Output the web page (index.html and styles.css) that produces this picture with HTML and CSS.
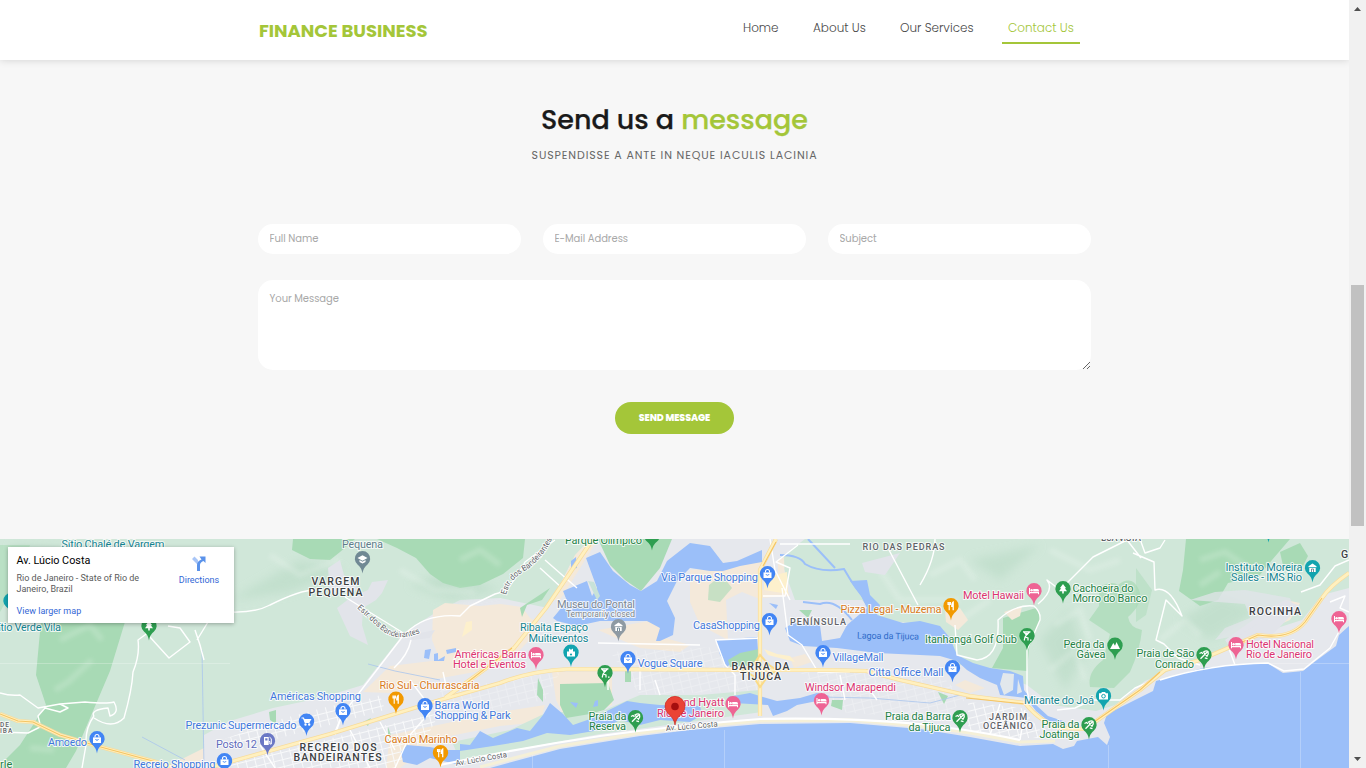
FILE: index.html
```html
<!DOCTYPE html>
<html lang="en">
<head>
<meta charset="utf-8">
<title>Finance Business - Contact Us</title>
<link rel="stylesheet" href="styles.css">
</head>
<body>
<div class="page">
  <header class="header">
    <div class="container header-inner">
      <a class="brand">FINANCE BUSINESS</a>
      <nav class="nav">
        <a class="nav-link home">Home</a>
        <a class="nav-link about">About Us</a>
        <a class="nav-link services">Our Services</a>
        <a class="nav-link contact active">Contact Us</a>
      </nav>
    </div>
  </header>
  <main>
    <section class="message">
      <div class="container">
        <h2 class="title">Send us a <em>message</em></h2>
        <p class="subtitle">Suspendisse a ante in neque iaculis lacinia</p>
        <form class="form">
          <div class="fields">
            <input class="field f-name" type="text" placeholder="Full Name">
            <input class="field f-mail" type="text" placeholder="E-Mail Address">
            <input class="field f-subject" type="text" placeholder="Subject">
          </div>
          <textarea class="field area" placeholder="Your Message"></textarea>
          <button class="send" type="button">SEND MESSAGE</button>
        </form>
      </div>
    </section>
    <section class="map">
      <svg class="map-canvas" viewBox="0 539 1349 229" width="1349" height="229">
        <defs>
          <path id="pin" d="M0 14.5C-1 9.5-2.4 8-4.8 5.8A7.7 7.7 0 1 1 4.8 5.8C2.4 8 1 9.5 0 14.5Z"/>
          <g id="bag"><path d="M-4-1.6H4V4H-4Z" fill="#fff"/><path d="M-2-1.5V-2.5A2 2 0 0 1 2-2.5V-1.5" fill="none" stroke="#fff" stroke-width="1.1"/><path d="M-1.5.2A1.6 1.6 0 0 0 1.5.2" fill="none" stroke="#4285f4"/></g>
          <g id="bed" fill="#fff"><path d="M-5-3H-4V1H5V3.2H4V2.2H-4V3.2H-5Z"/><circle cx="-2.4" cy="-.8" r="1.2"/><path d="M-.8-2H3.5Q5-2 5-.2V.5H-.8Z"/></g>
          <g id="fork" fill="none" stroke="#fff"><path d="M-3-4V-1.5H-.6V-4M-1.8-4V4.3" stroke-width="1.1"/><path d="M2.2 4.3V-4Q.8-3.2.8.3H2.2" stroke-width="1.3"/></g>
          <g id="tree" fill="#fff"><path d="M0-5L3.2-.8H1.8L4 2.2H-4L-1.8-.8H-3.2Z"/><path d="M-.8 2H.8V4.4H-.8Z"/></g>
          <g id="golf" stroke="#fff" fill="none" stroke-width="1.2"><path d="M-4-4.2H3.5M-3-4L-.5-1L-2 1L-2.800 4.5M-.5-1L2.5-4M-2 1L1 2V4.500"/><circle cx="-.3" cy="-2.300" r=".7"/><path d="M3 4.2H4.5"/></g>
          <g id="beach" stroke="#fff" fill="none" stroke-width="1.3"><path d="M-3.5 3.8L3.2-3M-.5-3Q2.500-5 4-3.6Q5-1 3 1.2Z"/><path d="M-4.500-1.500L-2.500-2.500L-1-1.200M.800 2.800L3.500 3.600"/></g>
          <g id="museum"><path d="M-4-1.8L0-4.5L4-1.8V-.8H-4ZM-3.2 0H3.2V4H-3.2Z" fill="#fff"/><path d="M-1 4V1H1V4" fill="none" stroke="#78909c"/></g>
          <g id="cap" fill="#fff"><path d="M-5-1L0-3.8L5-1L0 1.8Z"/><path d="M-3 1V3L0 4.5L3 3V1L0 2.7Z"/></g>
          <g id="cart" stroke="#fff" fill="none" stroke-width="1.2"><path d="M-5-3.5H-3L-1.3 1H3"/><path d="M-2-2H4L2.7.2H-1.3Z" fill="#fff"/><circle cx="-1" cy="3" r=".6"/><circle cx="2.7" cy="3" r=".6"/></g>
          <g id="fuel"><path d="M-3.5-4H1.2V4H-3.5Z" fill="#fff"/><path d="M-2.3-2.7H0V-.5H-2.3Z" fill="#6b78c5"/><path d="M1.3.5H2.4V3H3.8V-2.3L2-3.8" fill="none" stroke="#fff"/></g>
          <g id="camera"><path d="M-4.5-2.8H-2.5L-1.5-4H1.5L2.5-2.8H4.5V3.4H-4.5Z" fill="#fff"/><circle r="1.8" cy=".2" fill="none" stroke="#12a4af"/></g>
          <g id="peak" fill="#fff"><path d="M-5 3.5L-1.7-2.5L0 .3L1.5-3.5L5 3.5Z"/></g>
          <g id="stage"><path d="M-4-1H4V4H-4ZM-2-4L0-2.8L2-4V-.5H-2Z" fill="#fff"/><circle cy="2" r="1.1" fill="#12a4af"/></g>
          <pattern id="streets" width="9" height="7" patternUnits="userSpaceOnUse" patternTransform="rotate(-14)"><path d="M0 .5H9M.5 0V7" stroke="#f8f9fa" stroke-width="1" fill="none"/></pattern>
          <filter id="soft"><feGaussianBlur stdDeviation="5"/></filter>
          <filter id="relief"><feGaussianBlur stdDeviation="2"/></filter>
        </defs>

        <rect class="urban" x="0" y="539" width="1349" height="229"/>

        <!-- woodland and hills -->
        <path class="wood" d="M0 539H590L570 565L548 608L500 598L460 600L435 613L405 632L363 685L320 698L273 708L230 721L204 735L204 768H0Z"/>
        <path class="wood" d="M780 558L805 539H1349V588L1322 595L1302 620L1258 634L1228 646L1190 662L1145 681L1115 705L1096 711L1053 705L1027 685L990 670L955 664L930 625L880 620L862 600L795 600Z"/>
        <g class="shade" filter="url(#soft)">
          <path d="M230 600L300 560L345 570L290 592ZM410 585L450 570L500 590L450 600ZM10 545L60 548L45 590ZM970 560L1040 545L1000 580ZM1040 640L1070 610L1085 655L1065 690ZM1180 620L1220 595L1260 610L1210 640Z"/>
        </g>
        <path class="forest" d="M42 610L128 612L110 671L93 711L76 751L66 768H0V765L20 745L46 705L36 675Z"/>
        <path class="forest" d="M0 545H30L18 580L0 612Z" opacity=".55"/>
        <path class="forest" d="M293 539H355L340 552L330 560L310 559L292 550Z"/>
        <path class="forest" d="M377 539H525L523 558L503 574L480 585L460 588L443 583L430 574L416 558L397 548Z"/>
        <path class="forest" d="M598 539H672L660 568L641 591L625 580L610 565Z"/>
        <path class="forest" d="M1186 539H1290L1272 560L1259 576L1228 583L1218 600L1200 606L1179 591L1183 570Z"/>
        <path class="forest" d="M1280 552L1300 543L1308 556L1300 572L1284 570Z"/>
        <path class="forest" d="M1003 618L1036 608L1041 618L1029 648L1027 671L992 668L1003 648Z"/>
        <path class="forest" d="M1099 587Q1112 580 1118 585Q1132 574 1139 590Q1144 603 1128 617Q1130 628 1142 630Q1140 650 1130 672L1114 688L1090 687Q1087 672 1103 660L1110 634L1089 620L1099 606Z" opacity=".7"/>
        <path class="forest" d="M1136 568L1152 590L1146 615L1136 622Z" opacity=".45"/>
        <path class="ridge" filter="url(#relief)" d="M60 640L90 625L102 640M92 660L68 682L55 690M30 748L54 750M460 560L480 550L500 565M1200 560L1225 552L1245 566M1200 585L1220 572M930 575L960 560L975 580M1050 550L1090 570L1120 560M1055 625L1080 610L1090 640M270 555L300 575L340 560M400 570L435 590L475 592M1160 640L1185 620L1200 635M880 570L900 600L960 600M960 620L990 600M1050 670L1075 650L1085 680"/>

        <!-- sand-coloured blocks -->
        <path class="sand" d="M433 610L445 603L480 606L500 604L522 607L530 618L543 625L520 650L475 672L430 680L390 693L363 692L390 666L440 660L432 640Z"/>
        <path class="sand" d="M575 555L590 539H598L582 565L560 600L553 600Z"/>
        <path class="sand" d="M690 570L740 566L762 555L762 600L742 592L726 600L728 640L700 625L690 602Z"/>
        <path class="forest" d="M709 585L722 575L732 588L720 602L708 600Z" opacity=".6"/>
        <path class="sand" d="M598 630L655 620L665 638L690 645L680 652L640 648ZM552 672L612 671L612 705L566 720L556 700ZM180 760L204 748V768H180ZM390 735L500 712L545 705L540 722L500 726L440 738L400 768H386Z"/>
        <path class="sand" d="M1286 600L1300 603L1290 620L1262 632L1255 622L1270 608ZM1004 612L1022 606L1020 616L1012 620ZM945 610L960 608L968 620L958 630L946 622ZM760 590L785 585L790 596L760 598ZM790 658L805 654L812 662L794 668ZM955 685L970 693L985 688L965 680ZM778 560L784 557L785 592L778 590Z"/>
        <path class="bright-block" d="M466 622L472 621V630L462 637ZM764 578L787 572L788 594L764 590ZM764 649L777 654L790 656L795 662L768 655Z"/>
        <path class="town" d="M337 608L350 598L368 590L372 582L388 580L382 593L376 600L363 608L362 625L368 645L350 636ZM328 568L340 560L344 575L360 590L330 594ZM1225 640L1260 615L1285 600L1300 606L1275 632L1235 655ZM862 563L900 553L885 575L865 572ZM410 635L435 630L430 638L412 640Z"/>
        <path class="town" d="M1190 600L1215 592L1245 590L1290 598L1296 612L1260 622L1240 635L1215 640L1225 628L1250 618L1245 604Z" opacity=".75"/>
        <path class="grid-lines" fill="url(#streets)" d="M222 740L270 722L330 706L360 702L380 695L385 710L330 725L240 748ZM220 765L340 736L440 712L428 735L395 768H222ZM968 702L1022 708L1040 730L1055 738L1020 738L968 730Z"/>
        <path class="grid-lines" opacity=".35" fill="url(#streets)" d="M440 690L560 672L545 700L440 720ZM610 652L740 646L760 690L640 695ZM800 672L940 674L965 700L940 720L840 712Z"/>
        <path class="wood" d="M452 742L510 730L548 712L600 712L640 695L700 695L760 690L762 712L690 722L600 734L460 760Z"/>
        <path class="forest" d="M560 684L608 683L614 700L604 710L590 714L566 718L560 705ZM538 678L543 690L543 702L537 695ZM625 671H631V682H625ZM799 610L812 610L808 618ZM832 700L843 700L842 710L831 706ZM938 692L948 696L944 704ZM520 608L550 588L542 600L527 605L522 617ZM269 712L276 710V724L270 720ZM363 722L371 718L368 726ZM388 727L391 735L388 742Z"/>

        <!-- water -->
        <path class="water" d="M586 558L600 552L613 571L630 585L641 591L657 581L667 561L690 543L710 546L723 563L737 561L762 550L762 562L740 566L723 571L710 571L690 568L677 581L667 601L675 618L673 635L660 641H656L660 628L647 621L600 621L577 626L557 621L553 618L567 601L563 591L587 581L592 596L597 588Z"/>
        <path class="park-edge" d="M588 581L597 600L600 596L594 582Z"/>
        <path class="water" d="M785 628L793 623L820 625L822 641L840 638L847 625L867 608L860 594L850 581L867 580L870 595L880 605L877 615L903 623L920 621L940 626L950 638L957 655L973 663L990 668L1010 671L1023 676L1024 690L1035 704L1048 716L1066 722L1052 724L1036 711L1026 698L1000 695L997 685L980 678L967 670L957 661L940 656L920 655L877 653L837 648L803 646L790 641Z"/>
        <path class="land" d="M1003 673L1014 674L1013 690L1004 695L1000 684ZM1018 679L1022 692L1017 694Z"/>
        <path class="water" d="M716 640L757 637L758 650L740 655L727 667L720 655Z"/>
        <path class="forest" d="M759 649L758 665L730 667L728 660L740 653Z"/>
        <path class="water" d="M728 697L750 693L763 697L777 701L800 698L817 693L830 696L817 701L797 705L787 711L773 716L768 705L733 703Z"/>
        <path class="water" d="M460 744L470 745L480 731L493 738L517 728L530 731L543 715L550 703L563 714L573 725L593 718L607 711L627 701L640 703L660 705L700 706L702 715L690 722L660 720L640 725L620 720L600 730L570 735L547 733L523 741L493 746L460 751Z"/>
        <path class="water" d="M401 752L407 745L430 747L445 750L460 750V765L430 758L417 765L403 762Z"/>
        <path class="water" d="M425 650L431 649L429 659L424 658ZM434 654L438 653L438 660L445 656L444 661L434 661ZM446 650L456 648V652L447 654ZM570 702L578 703L576 708ZM595 701L598 700V706L593 707ZM571 561L576 557L577 568L571 569ZM769 603L778 605L776 609Z"/>
        <path class="stream" d="M780 555Q800 555 805 564Q820 573 844 569Q856 590 866 600M803 602L820 604Q835 598 852 620M808 539L835 568"/>
        <path class="canal" d="M818 697L870 698L930 703L960 695M202 650L204 768M142 737L185 760M368 664L395 671L440 680"/>
        <path class="beach-strip" d="M480 767L560 746L640 733L690 727L760 721L850 720L920 726L970 733L1020 742L1055 741"/>
        <path class="water" d="M490 768L560 749L640 736L690 730L760 724L850 723L920 729L970 737L1020 746L1053 744L1063 749L1074 746L1077 741L1098 737L1107 745L1110 737L1104 723L1107 714L1133 701L1153 691L1156 681L1203 668L1246 664L1269 664L1283 673L1303 671L1313 663L1336 646L1339 635L1349 626V768Z"/>
        <path class="tile-edge" d="M724.500 730V768M1108.500 745V768M1300.500 672V768M532.500 755V768M1270 663.500H1349M0 663.500H230"/>

        <!-- local streets -->
        <g class="road">
          <path d="M0 693Q10 696 20 695L38 708L60 704L68 708L60 712L45 708L38 716L41 728M0 732L28 733L42 726M60 704L85 702Q107 704 114 702Q120 713 110 716L108 708Q90 710 94 716M94 716Q85 728 86 745L82 768M94 718Q112 730 124 718Q132 690 133 672Q140 655 138 640L149 632M149 636L169 658L190 642L180 628L168 626M195 630L200 645L204 660M197 640L208 622"/>
          <path d="M230 612Q255 613 270 605Q300 590 315 590M345 597L405 634Q425 613 460 616L470 606L495 594Q510 592 525 562L555 540M403 636L342 715L335 735M411 640Q408 655 394 668"/>
          <path d="M540 568L562 588M545 560L577 588M598 643L700 645M715 640L762 638M716 641L725 665L735 675V695M782 588L788 635L802 645L818 672L850 672M770 539L775 570L790 600M763 596H785L790 568L776 562L798 545M780 544H850M889 550L918 605M935 539Q935 560 920 585"/>
          <path d="M955 625L957 655L977 660Q1000 658 998 620Q1015 604 1034 606Q1041 612 1040 620L1027 650V690L1030 705M1038 604Q1055 590 1047 580L1060 590Q1080 570 1093 557L1115 546L1127 540L1141 558M1133 553L1154 562L1155 590Q1170 585 1182 616L1166 600L1156 640L1164 644L1178 658M1140 539L1145 553L1160 548L1165 540M1178 658L1200 665M1228 646L1235 665M1301 592L1320 585L1335 566L1349 560M1160 680Q1210 664 1268 663L1284 671L1304 669L1330 648L1340 630"/>
          <path d="M1057 710L1075 708L1092 700L1120 700L1135 688L1149 682M1330 602L1345 596L1340 608L1349 612M840 675L845 700M870 690L877 700M655 680L660 695M640 668V690M608 670V690"/>
          <path d="M335 732L342 715M260 745L275 768M350 730L370 768M380 722L395 750M430 712L410 735L395 768M443 672L447 690M410 680L425 700M1000 704L990 735M1025 710L1020 740"/>
        </g>
        <path class="road coast" d="M440 765Q520 748 600 736Q680 725 760 719Q840 717 920 724Q985 732 1020 740"/>

        <!-- highways -->
        <g class="highway-case">
          <path d="M0 714L18 721L33 722L60 735L97 746L160 763L175 768M208 768L330 734L440 700L500 683Q530 671 570 669L762 670L830 670L866 671L900 680L970 696L1025 703Q1040 722 1060 728L1085 729L1140 690L1165 670L1200 660L1258 635Q1290 640 1305 622L1322 598Q1330 586 1349 573"/>
          <path d="M593 539L546 608L514 648L445 698M776 539L760 570V716"/>
        </g>
        <g class="highway">
          <path d="M0 714L18 721L33 722L60 735L97 746L160 763L175 768M208 768L330 734L440 700L500 683Q530 671 570 669L762 670L830 670L866 671L900 680L970 696L1025 703Q1040 722 1060 728L1085 729L1140 690L1165 670L1200 660L1258 635Q1290 640 1305 622L1322 598Q1330 586 1349 573"/>
          <path d="M593 539L546 608L514 648L445 698M776 539L760 570V716"/>
        </g>
        <path class="junction" d="M760 655L769 665L777 670L768 676L760 687L753 676L744 670L754 664Z"/>
        <path class="bright" d="M966 698L1026 704M512 648L460 688M776 542L763 566M1084 729L1140 690L1160 672M1240 643L1258 635Q1290 640 1305 622L1322 598M0 714L18 721L33 722L60 735L97 746L160 763"/>

        <!-- curved and plain place names -->
        <path id="c1" class="guide" d="M357 608Q372 622 384 632Q400 643 424 631"/>
        <path id="c2" class="guide" d="M506 595Q510 578 528 569Q544 556 552 539V520"/>
        <g class="street-name">
          <text textLength="74"><textPath href="#c1">Estr. dos Bandeirantes</textPath></text>
          <text textLength="74"><textPath href="#c2">Estr. dos Bandeirantes</textPath></text>
          <text transform="translate(456 766) rotate(-10)" textLength="52">Av. Lúcio Costa</text>
          <text transform="translate(666 731) rotate(-5)" textLength="52">Av. Lúcio Costa</text>
        </g>
        <g class="district">
          <text x="311.500" y="585" textLength="48">VARGEM</text><text x="308.500" y="596" textLength="54">PEQUENA</text>
          <text x="299.500" y="751" textLength="77">RECREIO DOS</text><text x="293.500" y="761" textLength="88">BANDEIRANTES</text>
          <text x="731.500" y="669.500" textLength="58">BARRA DA</text><text x="740" y="680" textLength="41">TIJUCA</text>
          <text x="1249" y="615" textLength="52">ROCINHA</text><text x="1341" y="558">G</text>
        </g>
        <g class="district minor">
          <text x="862.500" y="550" textLength="82">RIO DAS PEDRAS</text><text x="790" y="625" textLength="56">PENÍNSULA</text>
          <text x="989" y="720" textLength="38">JARDIM</text><text x="983" y="729" textLength="50">OCEÂNICO</text>
          <text x="0" y="727" class="tiny">DE</text><text x="0" y="733" class="tiny">IBA</text><text x="1101" y="540.500" textLength="40">BOA VISTA</text>
        </g>
        <g class="label blue">
          <text x="48" y="745.500" textLength="39">Amoedo</text><text x="133.500" y="768" textLength="82">Recreio Shopping</text>
          <text x="185.500" y="729" textLength="111">Prezunic Supermercado</text><text x="270" y="699.500" textLength="91">Américas Shopping</text>
          <text x="434.500" y="708.500" textLength="55">Barra World</text><text x="434.500" y="718.500" textLength="76">Shopping &amp; Park</text>
          <text x="661" y="581" textLength="97">Via Parque Shopping</text><text x="693" y="628.500" textLength="67">CasaShopping</text>
          <text x="637.500" y="667" textLength="65">Vogue Square</text><text x="832.500" y="660.500" textLength="51">VillageMall</text>
          <text x="868.500" y="675.500" textLength="75">Citta Office Mall</text>
          <text transform="translate(857 638.500) rotate(1)" textLength="62" class="lake">Lagoa da Tijuca</text>
        </g>
        <g class="label slate"><text x="216" y="748" textLength="41" fill="#5f6bbb">Posto 12</text><text x="342" y="548" textLength="41">Pequena</text>
          <text x="557" y="608" textLength="78" class="muted">Museu do Pontal</text><text x="566" y="617" textLength="69" class="closed">Temporarily closed</text></g>
        <g class="label orange">
          <text x="379.500" y="689" textLength="100">Rio Sul - Churrascaria</text><text x="384.500" y="742.500" textLength="73">Cavalo Marinho</text><text x="840.500" y="613" textLength="101">Pizza Legal - Muzema</text>
        </g>
        <g class="label pink">
          <text x="454.500" y="658" textLength="72">Américas Barra</text><text x="453" y="668" textLength="73">Hotel e Eventos</text>
          <text x="667" y="706" textLength="57">Grand Hyatt</text><text x="657" y="716.500" textLength="67">Rio de Janeiro</text>
          <text x="805" y="690.500" textLength="91">Windsor Marapendi</text><text x="963" y="598.500" textLength="61">Motel Hawaii</text>
          <text x="1246" y="647.500" textLength="68">Hotel Nacional</text><text x="1246" y="657.500" textLength="66">Rio de Janeiro</text>
        </g>
        <g class="label teal">
          <text x="61.500" y="548" textLength="103">Sítio Chalé de Vargem</text><text x="-8" y="630.500" textLength="69">Sítio Verde Vila</text>
          <text x="520" y="631" textLength="68">Ribalta Espaço</text><text x="528.500" y="641.500" textLength="60">Multieventos</text>
          <text x="1225.500" y="570.500" textLength="77">Instituto Moreira</text><text x="1231" y="580.500" textLength="71">Salles - IMS Rio</text>
          <text x="1024" y="703.500" textLength="70">Mirante do Joá</text>
        </g>
        <g class="label green">
          <text x="-6" y="768">arle</text><text x="565" y="543.500" textLength="77">Parque Olímpico</text>
          <text x="588.500" y="720" textLength="38">Praia da</text><text x="589" y="730" textLength="37">Reserva</text>
          <text x="1072.500" y="591.500" textLength="61">Cachoeira do</text><text x="1072.500" y="602" textLength="75">Morro do Banco</text>
          <text x="925" y="643" textLength="92">Itanhangá Golf Club</text><text x="1063.500" y="648" textLength="41">Pedra da</text><text x="1076.500" y="658" textLength="29">Gávea</text>
          <text x="1136.500" y="657" textLength="58">Praia de São</text><text x="1155" y="667.500" textLength="39">Conrado</text>
          <text x="885" y="720" textLength="66">Praia da Barra</text><text x="908.500" y="730.500" textLength="42">da Tijuca</text>
          <text x="1041.500" y="727.500" textLength="38">Praia da</text><text x="1039.500" y="738" textLength="40">Joatinga</text>
        </g>

        <!-- place markers -->
        <g class="pin-blue">
          <g transform="translate(97 739)"><use href="#pin"/><use href="#bag"/></g>
          <g transform="translate(224.500 761)"><use href="#pin"/><use href="#bag"/></g>
          <g transform="translate(343 711)"><use href="#pin"/><use href="#bag"/></g>
          <g transform="translate(306.500 721.500)"><use href="#pin"/><use href="#cart"/></g>
          <g transform="translate(425 706)"><use href="#pin"/><use href="#bag"/></g>
          <g transform="translate(628 659)"><use href="#pin"/><use href="#bag"/></g>
          <g transform="translate(767.500 574)"><use href="#pin"/><use href="#bag"/></g>
          <g transform="translate(769.500 621)"><use href="#pin"/><use href="#bag"/></g>
          <g transform="translate(823 653)"><use href="#pin"/><use href="#bag"/></g>
          <g transform="translate(952.500 668)"><use href="#pin"/><use href="#bag"/></g>
        </g>
        <g class="pin-green">
          <g transform="translate(149 626)"><use href="#pin"/><use href="#tree"/></g>
          <g transform="translate(652 536)"><use href="#pin"/></g>
          <g transform="translate(605 673)"><use href="#pin"/><use href="#golf"/></g>
          <g transform="translate(635.500 718)"><use href="#pin"/><use href="#beach"/></g>
          <g transform="translate(1063 589)"><use href="#pin"/><use href="#tree"/></g>
          <g transform="translate(1027 636)"><use href="#pin"/><use href="#golf"/></g>
          <g transform="translate(1115 645.500)"><use href="#pin"/><use href="#peak"/></g>
          <g transform="translate(960 718)"><use href="#pin"/><use href="#beach"/></g>
          <g transform="translate(1089 725)"><use href="#pin"/><use href="#beach"/></g>
          <g transform="translate(1204 655)"><use href="#pin"/><use href="#beach"/></g>
        </g>
        <g class="pin-pink">
          <g transform="translate(536 655)"><use href="#pin"/><use href="#bed"/></g>
          <g transform="translate(733 704)"><use href="#pin"/><use href="#bed"/></g>
          <g transform="translate(821.500 701)"><use href="#pin"/><use href="#bed"/></g>
          <g transform="translate(1034 591)"><use href="#pin"/><use href="#bed"/></g>
          <g transform="translate(1236 645)"><use href="#pin"/><use href="#bed"/></g>
          <g transform="translate(1339 619)"><use href="#pin"/><use href="#bed"/></g>
        </g>
        <g class="pin-orange">
          <g transform="translate(396 699.500)"><use href="#pin"/><use href="#fork"/></g>
          <g transform="translate(440.500 753)"><use href="#pin"/><use href="#fork"/></g>
          <g transform="translate(951 606)"><use href="#pin"/><use href="#fork"/></g>
        </g>
        <g class="pin-teal">
          <g transform="translate(11 601)"><use href="#pin"/></g>
          <g transform="translate(571 652.500)"><use href="#pin"/><use href="#stage"/></g>
          <g transform="translate(1103.500 696)"><use href="#pin"/><use href="#camera"/></g>
          <g transform="translate(1312.500 568)"><use href="#pin"/><use href="#museum"/></g>
          <g transform="translate(1268.500 528)"><use href="#pin"/></g>
        </g>
        <g transform="translate(362.500 559)" fill="#708994"><use href="#pin"/><use href="#cap"/></g>
        <g transform="translate(618.500 627)" fill="#8e9aa3"><use href="#pin"/><use href="#museum"/></g>
        <g transform="translate(267.500 741)" fill="#6b78c5"><use href="#pin"/><use href="#fuel"/></g>
        <path d="M675 725C674 719 671.500 717 668 713.500A10 10 0 1 1 682 713.500C678.500 717 676 719 675 725Z" fill="#ea4335" stroke="#c5221f" stroke-width=".6"/>
        <circle cx="675" cy="706.500" r="3.800" fill="#a50e0e"/>
      </svg>
      <aside class="place-card">
        <div class="place-info">
          <strong class="place-name">Av. Lúcio Costa</strong>
          <span class="place-address">Rio de Janeiro - State of Rio de<br>Janeiro, Brazil</span>
          <a class="place-link larger">View larger map</a>
        </div>
        <a class="place-link directions">
          <svg width="16" height="16" viewBox="0 0 16 16"><path d="M6.500 16V9.500L1 4L3.500 1.500L7 5" fill="#a9c6f7"/><path d="M6 16V10Q6 6 10.500 4.500L8.500 1.500H14.500V8L12.500 6Q9 7.500 9 10V16Z" fill="#5a92ea"/></svg>
          Directions
        </a>
      </aside>
    </section>
  </main>
</div>
<div class="scrollbar">
  <svg width="17" height="17" viewBox="0 0 17 17"><path d="M5 11L8.500 7L12 11Z" fill="#505050"/></svg>
  <div class="track"><div class="thumb"></div></div>
  <svg width="17" height="17" viewBox="0 0 17 17"><path d="M5 6H12L8.500 10Z" fill="#505050"/></svg>
</div>
</body>
</html>
```
FILE: styles.css
```css
* { box-sizing: border-box; }
body { margin: 0; display: flex; height: 768px; overflow: hidden; background: #f7f7f7; font-family: Poppins, Inter, sans-serif; }
.page { width: 1349px; height: 768px; overflow: hidden; display: flex; flex-direction: column; }
.container { width: 833px; margin: 0 auto; }
.header { height: 60px; flex: none; background: #fff; box-shadow: 0 0 8px rgba(0,0,0,.16); position: relative; }
.header-inner { display: flex; justify-content: space-between; align-items: flex-start; }
.brand { padding: 18px 0 0 1px; font-size: 18px; line-height: 26px; font-weight: 700; color: #a4c639; letter-spacing: -.03px; white-space: nowrap; }
.nav { display: flex; gap: 23px; padding: 16px 11px 0 0; }
.nav-link { height: 28px; padding: 0 6px; font-size: 12px; line-height: 23px; font-weight: 300; color: #4a4a4a; letter-spacing: 0; white-space: nowrap; }
.nav-link.active { color: #a4c639; border-bottom: 2px solid #a4c639; }
.home { width: 47px; } .about { width: 64px; } .services { width: 85px; } .contact { width: 78px; }
.message { height: 479px; padding-top: 42px; text-align: center; }
.title { margin: 0; font-size: 27px; line-height: 36px; font-weight: 500; color: #1a1a1a; letter-spacing: 0; white-space: nowrap; -webkit-text-stroke: .25px currentColor; }
.title em { font-style: normal; color: #a4c639; }
.subtitle { margin: 8px 0 0; font-size: 11px; line-height: 18px; text-transform: uppercase; color: #666; letter-spacing: .89px; white-space: nowrap; }
.form { display: flex; flex-direction: column; align-items: center; padding-top: 60px; }
.fields { width: 100%; display: grid; grid-template-columns: repeat(3, 263px); gap: 22px; }
.field { width: 100%; height: 30px; border: 0; outline: 0; border-radius: 15px; background: #fff; padding: 0 11px 0 11.5px; font: 400 10px/15px Poppins, Inter, sans-serif; letter-spacing: -.05px; }
.field::placeholder { color: #a8a8a8; }
.area { height: 90px; margin: 26px 0 32px; padding: 11px 11px 11px 11.5px; display: block; resize: both; }
.send { width: 119px; height: 32px; padding: 0; border: 0; border-radius: 16px; background: #a4c639; color: #fff; font: 800 9.5px/32px Poppins, Inter, sans-serif; letter-spacing: -.1px; }
.map { height: 229px; position: relative; overflow: hidden; font-family: Roboto, sans-serif; }
.map-canvas { display: block; }
.urban { fill: #e6e8ed; }
.town { fill: #e2e4ea; }
.wood { fill: #d0e7d9; }
.forest { fill: #a8dab5; }
.park-edge { fill: #c8e2d8; }
.shade { fill: #bcdcc8; opacity: .65; }
.ridge { fill: none; stroke: #fff; stroke-width: 6; opacity: .17; stroke-linejoin: round; }
.sand { fill: #f4e9da; }
.bright-block { fill: #fdf0cc; }
.land { fill: #e2e8ec; }
.water { fill: #9bbff9; }
.stream { fill: none; stroke: #9bbff9; stroke-width: 2; }
.canal { fill: none; stroke: #a9c5ee; stroke-width: .8; }
.beach-strip { fill: none; stroke: #f5f0d8; stroke-width: 3; }
.tile-edge { stroke: #fff; opacity: .25; }
.road { fill: none; stroke: #fff; stroke-width: 1.4; stroke-linejoin: round; }
.coast { stroke-width: 2.2; }
.highway-case, .highway { fill: none; stroke-linejoin: round; }
.highway-case { stroke: #f8dc9c; stroke-width: 4.2; }
.highway { stroke: #fff0bf; stroke-width: 2.8; }
.junction { fill: none; stroke: #fbdb87; stroke-width: 2; }
.bright { fill: none; stroke: #f5c463; stroke-width: 1.1; }
.guide { fill: none; }
.map text { paint-order: stroke; stroke: rgba(255,255,255,.8); stroke-width: 2px; stroke-linejoin: round; }
.label { font-size: 11px; }
.street-name { font-size: 8px; fill: #5f6368; }
.district { font-size: 10.5px; font-weight: 500; fill: #3c4043; }
.minor { font-size: 9px; fill: #5f6368; }
.tiny { font-size: 6.5px; letter-spacing: 1px; }
.blue { fill: #3f78dc; }
.map .lake { font-size: 9px; fill: #2f6cc9; stroke: none; }
.slate { fill: #607d8b; }
.muted { fill: #7b8794; }
.closed { font-size: 9px; fill: #80868b; }
.orange { fill: #d97b1c; }
.pink { fill: #dc3471; }
.teal { fill: #168592; }
.green { fill: #258247; }
.pin-blue { fill: #4285f4; }
.pin-green { fill: #2e9e50; }
.pin-pink { fill: #ee6494; }
.pin-orange { fill: #f29900; }
.pin-teal { fill: #12a4af; }
.place-card { position: absolute; left: 8px; top: 8px; width: 226px; height: 76px; padding: 7px 11px 0 8.5px; display: flex; justify-content: space-between; background: #fff; box-shadow: 0 1px 4px rgba(0,0,0,.3); }
.place-info { display: flex; flex-direction: column; white-space: nowrap; }
.place-name { font-size: 10.8px; line-height: 13px; font-weight: 400; color: #000; }
.place-address { margin-top: 6px; font-size: 9px; line-height: 11px; color: #5b5b5b; }
.place-link { font-size: 9px; line-height: 12px; color: #3367d6; }
.larger { margin-top: 10px; }
.directions { display: flex; flex-direction: column; align-items: center; width: 48px; gap: 3px; padding-top: 1px; }
.scrollbar { width: 17px; height: 768px; background: #f1f1f1; display: flex; flex-direction: column; }
.scrollbar svg { display: block; flex: none; }
.track { flex: 1; padding: 268px 2px 0; }
.thumb { height: 241px; background: #c1c1c1; }
```
